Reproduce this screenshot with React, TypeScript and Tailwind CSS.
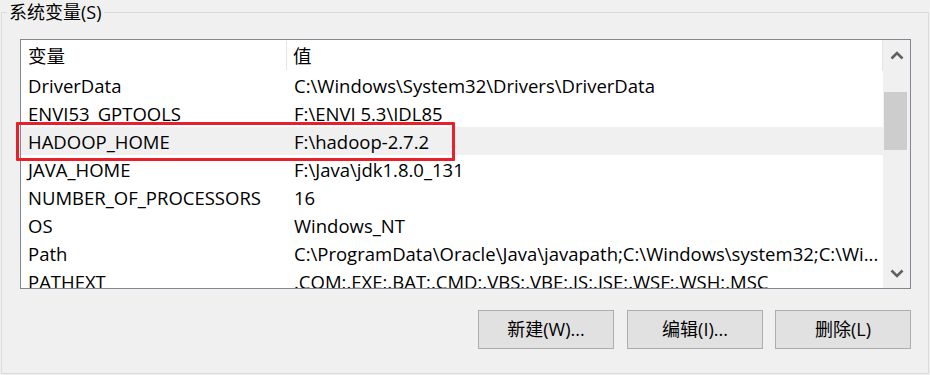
// System environment variables panel
import React from 'react';

type EnvVar = {
  name: string;
  value: string;
};

const rows: EnvVar[] = [
  { name: 'DriverData', value: 'C:\\Windows\\System32\\Drivers\\DriverData' },
  { name: 'ENVI53_GPTOOLS', value: 'F:\\ENVI 5.3\\IDL85' },
  { name: 'HADOOP_HOME', value: 'F:\\hadoop-2.7.2' },
  { name: 'JAVA_HOME', value: 'F:\\Java\\jdk1.8.0_131' },
  { name: 'NUMBER_OF_PROCESSORS', value: '16' },
  { name: 'OS', value: 'Windows_NT' },
  { name: 'Path', value: 'C:\\ProgramData\\Oracle\\Java\\javapath;C:\\Windows\\system32;C:\\Wi...' },
  { name: 'PATHEXT', value: '.COM;.EXE;.BAT;.CMD;.VBS;.VBE;.JS;.JSE;.WSF;.WSH;.MSC' }
];

const selected = 'HADOOP_HOME';

const Chevron = ({ up }: { up: boolean }) => (
  <svg width="14" height="9" viewBox="0 0 14 9">
    <path
      d={up ? 'M1.5 7.5 L7 2 L12.5 7.5' : 'M1.5 1.5 L7 7 L12.5 1.5'}
      fill="none"
      stroke="#606060"
      strokeWidth="2.6"
    />
  </svg>
);

const App = () => {
  return (
    <div className="relative w-[930px] h-[375px] overflow-hidden bg-[#f0f0f0] text-black font-['Open_Sans','Noto_Sans_CJK_SC',sans-serif]">
      <div className="pt-[12px] pl-[1px]">
        <div className="relative w-[928px] h-[362px] border border-[#dcdcdc] pl-[18px] pt-[26px]">
          <span className="absolute left-[5px] top-[-13px] px-[2px] bg-[#f0f0f0] text-[18px] leading-[24px]">
            系统变量(S)
          </span>

          <div className="flex w-[891px] h-[250px] border border-[#828790] bg-white overflow-hidden text-[18.5px]">
            <div className="w-[862px] flex flex-col">
              <div className="flex h-[31px] shrink-0 border-r border-[#e5e5e5]">
                <div className="w-[266px] pl-[7px] pt-[1px] flex items-center border-r border-[#e5e5e5] my-[1px]">变量</div>
                <div className="flex-1 pl-[6px] pt-[1px] flex items-center">值</div>
              </div>
              {rows.map(row => (
                <div
                  key={row.name}
                  className={`flex h-[28px] shrink-0 items-center pt-[2px] whitespace-nowrap ${row.name === selected ? 'bg-[#f0f0f0]' : ''}`}
                >
                  <div className="w-[266px] pl-[7px]">{row.name}</div>
                  <div className="flex-1 pl-[7px] overflow-hidden">{row.value}</div>
                </div>
              ))}
            </div>

            <div className="w-[27px] bg-[#f0f0f0] flex flex-col">
              <div className="h-[30px] flex items-center justify-center pt-[1px]">
                <Chevron up />
              </div>
              <div className="mt-[22px] h-[58px] w-[23px] ml-[1px] bg-[#cdcdcd]" />
              <div className="flex-1" />
              <div className="h-[30px] flex items-center justify-center">
                <Chevron up={false} />
              </div>
            </div>
          </div>

          <div className="flex w-[891px] justify-end mt-[21px] text-[18px]">
            <button className="w-[136px] h-[39px] border border-[#adadad] bg-[#e1e1e1]">新建(W)...</button>
            <button className="ml-[13px] w-[136px] h-[39px] border border-[#adadad] bg-[#e1e1e1]">编辑(I)...</button>
            <button className="ml-[12px] w-[136px] h-[39px] border border-[#adadad] bg-[#e1e1e1]">删除(L)</button>
          </div>
        </div>
      </div>

      <div className="absolute left-[16px] top-[122px] w-[439px] h-[39px] border-[3px] border-[#e8202a] rounded-[1px]" />
    </div>
  );
};

export default App;
